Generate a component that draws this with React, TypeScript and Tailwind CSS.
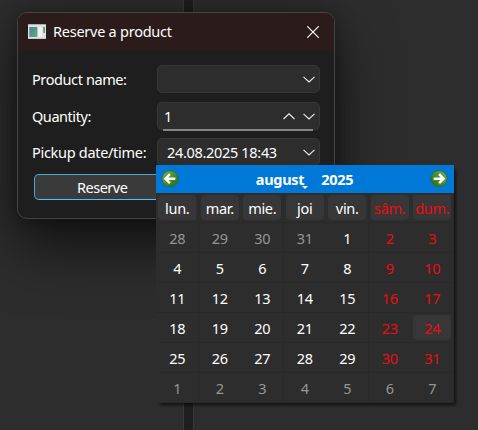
import React from "react";

const DAYS = ["lun.", "mar.", "mie.", "joi", "vin.", "sâm.", "dum."];
const WEEKS = [
  [28, 29, 30, 31, 1, 2, 3],
  [4, 5, 6, 7, 8, 9, 10],
  [11, 12, 13, 14, 15, 16, 17],
  [18, 19, 20, 21, 22, 23, 24],
  [25, 26, 27, 28, 29, 30, 31],
  [1, 2, 3, 4, 5, 6, 7],
];

function Chevron({ up = false }: { up?: boolean }) {
  return (
    <svg width="12" height="7" viewBox="0 0 12 7" fill="none" stroke="#e6eef2" strokeWidth="1.1">
      <path d={up ? "M0.5 6 L6 0.8 L11.5 6" : "M0.5 0.8 L6 6 L11.5 0.8"} />
    </svg>
  );
}

function ArrowButton({ right = false }: { right?: boolean }) {
  return (
    <svg width="18" height="18" viewBox="0 0 18 18" className={right ? "-scale-x-100" : ""}>
      <defs>
        <linearGradient id={right ? "gr" : "gl"} x1="0" y1="0" x2="1" y2="1">
          <stop offset="0" stopColor="#79ad6c" />
          <stop offset="0.45" stopColor="#4c9432" />
          <stop offset="1" stopColor="#246a10" />
        </linearGradient>
      </defs>
      <circle cx="9" cy="8.7" r="8.1" fill={right ? "url(#gr)" : "url(#gl)"} stroke="#35663a" strokeWidth="0.9" />
      <path d="M8.9 4.2 L4.4 8.7 L8.9 13.2 M5 8.7 H14.3" fill="none" stroke="#fff" strokeWidth="2.5" />
    </svg>
  );
}

function WindowIcon() {
  return (
    <svg width="18" height="15" viewBox="0 0 18 15">
      <defs>
        <linearGradient id="win" x1="0" y1="0" x2="1" y2="1">
          <stop offset="0" stopColor="#4a8295" />
          <stop offset="1" stopColor="#5fae7c" />
        </linearGradient>
      </defs>
      <rect width="18" height="15" fill="#dfe1e2" />
      <rect width="18" height="1" fill="#a9aeb2" />
      <rect y="14" width="18" height="1" fill="#c6c8ca" />
      <rect x="1.3" y="3" width="8" height="10" fill="url(#win)" />
      <rect x="10.3" y="3" width="4" height="10" fill="#f1f1f1" />
      <rect x="15.3" y="3" width="1.7" height="6" fill="url(#win)" />
    </svg>
  );
}

function Cell({ column, children }: { column: number; children: React.ReactNode }) {
  const edge = column % 2 === 0 ? "border-r border-r-[#292929] pr-[1.3px]" : "pr-[2.3px]";
  return <div className={`flex h-[30px] border-b border-b-[#292929] pb-[2px] pl-[2.3px] pt-[2px] ${edge}`}>{children}</div>;
}

function Calendar() {
  return (
    <div className="absolute left-[156px] top-[165px] h-[238px] w-[298px] bg-[#2d2d2d] shadow-[3px_3px_3px_-1px_rgba(0,0,0,0.6)]">
      <div className="flex h-7 items-center bg-[#0078d7] pl-[5px] pr-[6px] text-[14.5px] font-bold tracking-[-0.3px] text-white">
        <ArrowButton />
        <div className="flex flex-1 items-center justify-center pt-px">
          <span className="relative mr-[17px]">
            august
            <svg className="absolute -right-[4px] bottom-[1px]" width="6" height="3" viewBox="0 0 6 3">
              <path d="M0 0 H6 L3 3 Z" fill="#fff" />
            </svg>
          </span>
          <span>2025</span>
        </div>
        <ArrowButton right />
      </div>
      <div className="grid w-[297.5px] grid-cols-7 text-[14.5px] tracking-[-0.3px]">
        {DAYS.map((d, i) => (
          <Cell key={d} column={i}>
            <span className={`flex flex-1 items-center justify-center rounded-[4px] bg-[#373737] pt-[2px] ${i > 4 ? "text-[#ee0c12]" : "text-white"}`}>{d}</span>
          </Cell>
        ))}
        {WEEKS.map((w, r) =>
          w.map((n, c) => {
            const outside = (r === 0 && c < 4) || r === 5;
            const color = outside && !(r === 0 && c > 3) ? "text-[#959595]" : c > 4 ? "text-[#ee0c12]" : "text-white";
            return (
              <Cell key={`${r}-${c}`} column={c}>
                <span className={`flex flex-1 items-center justify-center rounded-[4px] pt-[2px] ${color} ${r === 3 && c === 6 ? "bg-[#373737]" : ""}`}>{n}</span>
              </Cell>
            );
          }),
        )}
      </div>
    </div>
  );
}

export default function App() {
  return (
    <div className="relative h-[430px] w-[478px] overflow-hidden bg-[#1e1e1e] font-['Noto_Sans','Open_Sans',sans-serif] text-[14.5px] text-white">
      <div className="flex h-full gap-[9px]">
        <div className="w-[184px] border-r border-[#383838] bg-[#2d2d2d]" />
        <div className="flex-1 border-l border-[#383838] bg-[#2d2d2d]" />
      </div>
      <div className="absolute left-[17px] top-[12px] h-[207px] w-[318px] overflow-hidden rounded-[10px] border border-[#434343] bg-[#1e1e1e] shadow-[0_28px_60px_rgba(0,0,0,0.6),0_2px_20px_rgba(0,0,0,0.35)]">
        <div className="flex h-[37px] items-center bg-[#2b1b1a] pl-[10px] pr-[15px]">
          <WindowIcon />
          <span className="ml-[7px] flex-1 tracking-[-0.25px]">Reserve a product</span>
          <svg width="12" height="12" viewBox="0 0 12 12" stroke="#fff" strokeWidth="1.1">
            <path d="M0.3 0.3 L11.7 11.7 M11.7 0.3 L0.3 11.7" />
          </svg>
        </div>
        <div className="flex flex-col pl-[14px] pt-[15px]">
          <div className="flex h-7 items-center">
            <span className="w-[125px] pt-[2px] tracking-[-0.4px]">Product name:</span>
            <div className="flex h-7 w-[163px] items-center justify-end rounded-[5px] border border-[#373737] bg-[#2d2d2d] pr-[4px] pt-px">
              <Chevron />
            </div>
          </div>
          <div className="mt-[9px] flex h-7 items-center">
            <span className="w-[125px] pt-[2px] tracking-[-0.45px]">Quantity:</span>
            <div className="relative flex h-7 w-[163px] items-center rounded-[5px] border border-[#373737] bg-[#2d2d2d] pl-[6px] pr-[4px]">
              <span className="flex-1 pt-px">1</span>
              <Chevron up />
              <span className="w-2" />
              <Chevron />
              <div className="absolute -bottom-[2px] left-[5px] h-[2px] w-[150px] bg-[#858585]" />
            </div>
          </div>
          <div className="mt-[8px] flex h-7 items-center">
            <span className="w-[125px] pt-[2px] tracking-[-0.3px]">Pickup date/time:</span>
            <div className="flex h-7 w-[163px] items-center rounded-[5px] border border-[#373737] bg-[#2d2d2d] pl-[9px] pr-[4px]">
              <span className="flex-1 pt-[2px] tracking-[-0.32px]">24.08.2025 18:43</span>
              <Chevron />
            </div>
          </div>
          <div className="ml-[2px] mt-[8px] flex h-[26px] w-[284px] items-center rounded-[5px] border border-[#4aa6dc] border-b-[#4cc2ff] bg-[#3a3a3a] pl-[42px] pt-[2px] tracking-[-0.5px]">
            Reserve
          </div>
        </div>
      </div>
      <Calendar />
    </div>
  );
}
